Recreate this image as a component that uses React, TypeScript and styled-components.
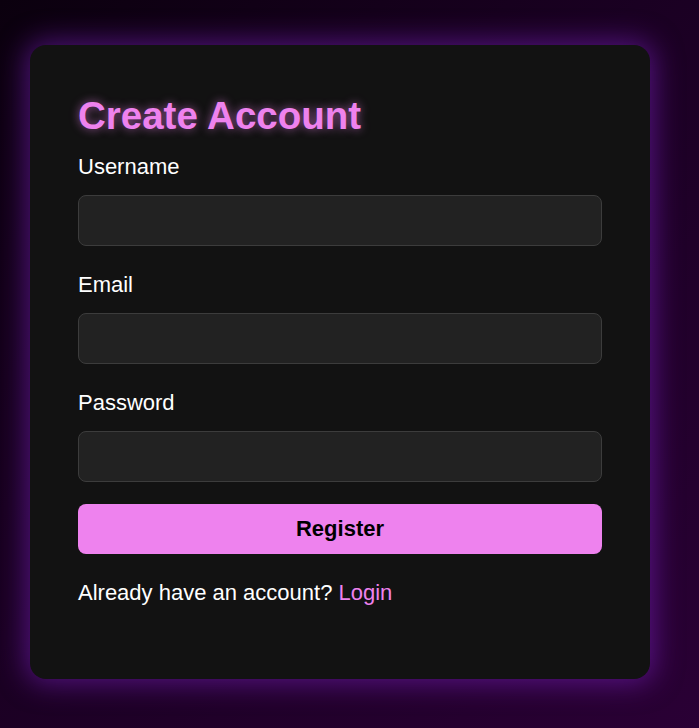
import React from "react";
import styled, { createGlobalStyle } from "styled-components";

const GlobalStyle = createGlobalStyle`
  html, body {
    margin: 0;
    padding: 0;
    min-height: 100%;
  }
  body {
    background: linear-gradient(135deg, #0b000e 0%, #1a0022 45%, #2a0035 100%);
    min-height: 728px;
    font-family: "Liberation Sans", Arial, sans-serif;
    color: #ffffff;
  }
`;

const Page = styled.div`
  padding: 45px 30px 49px 30px;
`;

const Card = styled.div`
  box-sizing: border-box;
  width: 620px;
  background: #121212;
  border-radius: 16px;
  padding: 49px 48px 47px 48px;
  box-shadow: 0 0 28px 4px rgba(128, 32, 200, 0.55);
`;

const Title = styled.h2`
  margin: 0 0 16px 0;
  font-size: 38.5px;
  line-height: 44px;
  font-weight: 700;
  color: #ee82ee;
  text-shadow: 0 0 10px rgba(238, 130, 238, 0.6);
`;

const Form = styled.form`
  display: flex;
  flex-direction: column;
`;

const FieldGroup = styled.div`
  display: flex;
  flex-direction: column;
  margin-bottom: 26px;
  &:last-of-type {
    margin-bottom: 22px;
  }
`;

const Label = styled.label`
  display: block;
  font-size: 22px;
  line-height: 25px;
  margin-bottom: 16px;
  color: #ffffff;
`;

const Input = styled.input`
  box-sizing: border-box;
  width: 100%;
  height: 51px;
  background: #222222;
  border: 1px solid #3c3c3c;
  border-radius: 8px;
  color: #ffffff;
  font-family: "Liberation Sans", Arial, sans-serif;
  font-size: 18px;
  padding: 0 14px;
  outline: none;
`;

const Button = styled.button`
  box-sizing: border-box;
  width: 100%;
  height: 50px;
  border: none;
  border-radius: 8px;
  background: #ee82ee;
  color: #000000;
  font-family: "Liberation Sans", Arial, sans-serif;
  font-size: 22px;
  font-weight: 700;
  cursor: pointer;
`;

const Footer = styled.p`
  margin: 26px 0 27px 0;
  font-size: 22px;
  line-height: 25px;
  color: #ffffff;
`;

const Link = styled.a`
  color: #ee82ee;
  text-decoration: none;
`;

export default function App() {
  return (
    <>
      <GlobalStyle />
      <Page>
        <Card>
          <Title>Create Account</Title>
          <Form onSubmit={(e) => e.preventDefault()}>
            <FieldGroup>
              <Label htmlFor="username">Username</Label>
              <Input id="username" type="text" />
            </FieldGroup>
            <FieldGroup>
              <Label htmlFor="email">Email</Label>
              <Input id="email" type="email" />
            </FieldGroup>
            <FieldGroup>
              <Label htmlFor="password">Password</Label>
              <Input id="password" type="password" />
            </FieldGroup>
            <Button type="submit">Register</Button>
          </Form>
          <Footer>
            Already have an account? <Link href="#">Login</Link>
          </Footer>
        </Card>
      </Page>
    </>
  );
}
